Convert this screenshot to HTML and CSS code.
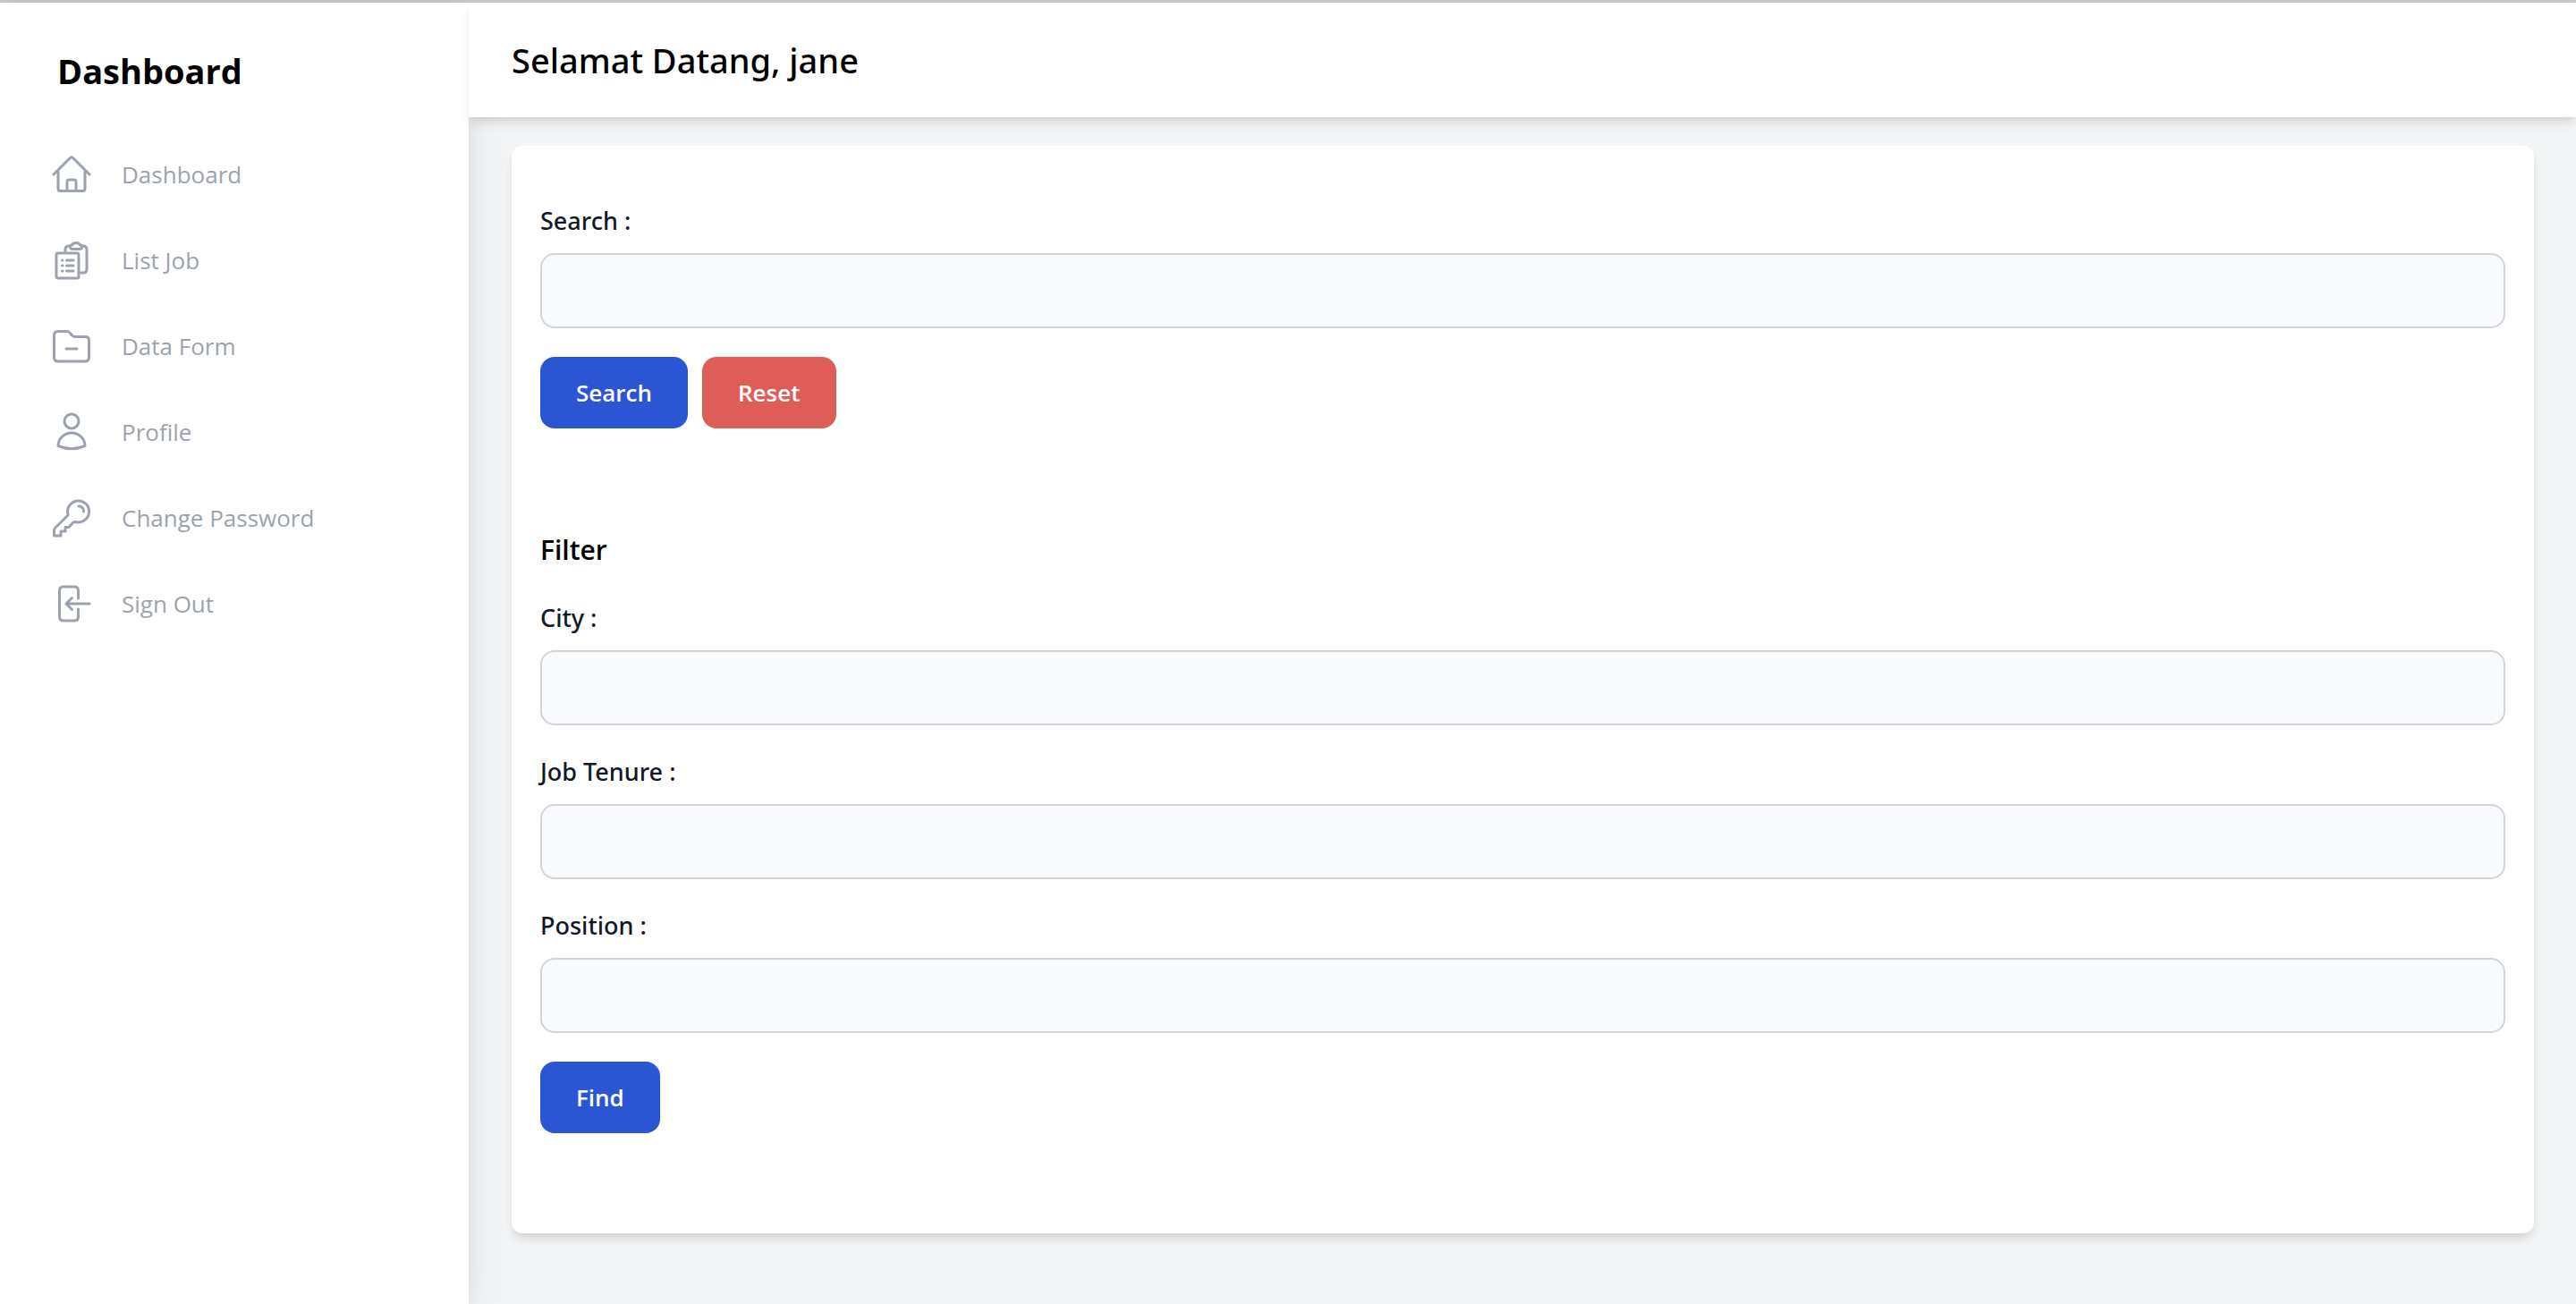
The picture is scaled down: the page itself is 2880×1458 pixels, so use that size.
FILE: index.html
```html
<!DOCTYPE html>
<html lang="id">
<head>
<meta charset="utf-8">
<title>Dashboard</title>
<link rel="stylesheet" href="styles.css">
</head>
<body>
<div class="layout">
  <aside class="sidebar">
    <h1 class="brand">Dashboard</h1>
    <nav class="nav">
      <a class="nav-link" href="#"><svg class="icon" viewBox="0 0 48 48"><path d="M4 24 22.500 5.500Q24 4 25.500 5.500L44 24M9 19V40Q9 42.500 11.500 42.500H36.500Q39 42.500 39 40V19M19 42V32Q19 30 21 30H27Q29 30 29 32V42"/></svg><span>Dashboard</span></a>
      <a class="nav-link" href="#"><svg class="icon" viewBox="0 0 48 48"><rect x="7" y="16" width="25" height="28" rx="2"/><path d="M17 15V12Q17 8 21 8H22M36 8H37Q41 8 41 12V34Q41 38 37 38H33M22.500 9Q22.500 7 25 6.500Q26 4.500 29 4.500T33 6.500Q35.500 7 35.500 9Q35.500 11.500 33 11.500H25Q22.500 11.500 22.500 9ZM13.500 24H14M18.500 24H26M13.500 30H14M18.500 30H26M13.500 36H14M18.500 36H26"/></svg><span>List Job</span></a>
      <a class="nav-link" href="#"><svg class="icon" viewBox="0 0 48 48"><path d="M4.500 12Q4.500 7.500 9 7.500H19Q21 7.500 22.500 9.500L24.500 12Q26 13.500 28 13.500H39.500Q43.500 13.500 43.500 17.500V36.500Q43.500 41 39 41H9Q4.500 41 4.500 36.500ZM18 27H30"/></svg><span>Data Form</span></a>
      <a class="nav-link" href="#"><svg class="icon" viewBox="0 0 48 48"><circle cx="24" cy="12" r="8"/><path d="M9 39.500A15 14.500 0 0 1 39 39.500Q24 46 9 39.500Z"/></svg><span>Profile</span></a>
      <a class="nav-link" href="#"><svg class="icon" viewBox="0 0 48 48"><path d="M20 20A12 12 0 1 1 28.500 28.500L26 29 21 34.500H17V39H12V44H4.500V38Q4.500 36.500 5.500 35.500L20 21ZM32 11Q37.500 11 37.500 17"/></svg><span>Change Password</span></a>
      <a class="nav-link" href="#"><svg class="icon" viewBox="0 0 48 48"><path d="M31.500 18V9.500Q31.500 5 27 5H15Q10.500 5 10.500 9.500V38.500Q10.500 43 15 43H27Q31.500 43 31.500 38.500V30M44 24H18M24.500 17.500 18 24 24.500 30.500"/></svg><span>Sign Out</span></a>
    </nav>
  </aside>
  <div class="content">
    <header class="topbar"><h2 class="greeting">Selamat Datang, jane</h2></header>
    <main class="main">
      <div class="card">
        <form class="form">
          <label class="label" for="search">Search :</label>
          <input class="input" id="search" type="text">
          <div class="actions">
            <button class="btn" type="button">Search</button>
            <button class="btn btn-danger" type="button">Reset</button>
          </div>
        </form>
        <form class="form form-filter">
          <h3 class="form-title">Filter</h3>
          <label class="label" for="city">City :</label>
          <input class="input" id="city" type="text">
          <label class="label" for="tenure">Job Tenure :</label>
          <input class="input" id="tenure" type="text">
          <label class="label" for="position">Position :</label>
          <input class="input" id="position" type="text">
          <div class="actions"><button class="btn" type="button">Find</button></div>
        </form>
      </div>
    </main>
  </div>
</div>
</body>
</html>
```
FILE: styles.css
```css
* { box-sizing: border-box; margin: 0; }
body {
  font-family: "Segoe UI", "Open Sans", "Noto Sans", sans-serif;
  font-size: 26px;
  line-height: 40px;
  color: #000;
  background: #f3f4f6;
}
.layout { display: flex; min-height: 100vh; border-top: 3px solid #c4c9c6; }
.sidebar {
  flex: 0 0 524px;
  background: #fff;
  box-shadow: 0 20px 50px -10px rgba(0, 0, 0, .12), 0 8px 20px -6px rgba(0, 0, 0, .1);
}
.brand { padding: 46px 64px 0; font-size: 38px; line-height: 60px; font-weight: 700; }
.nav { display: flex; flex-direction: column; padding: 38px 56px; }
.nav-link { display: flex; align-items: center; gap: 32px; height: 96px; color: #9ca3af; text-decoration: none; }
.icon {
  flex: none; width: 48px; height: 48px; fill: none; stroke: currentColor;
  stroke-width: 3; stroke-linecap: round; stroke-linejoin: round;
}
.content { flex: 1; min-width: 0; }
.topbar {
  padding: 32px 48px; background: #fff;
  box-shadow: 0 8px 12px -2px rgba(0, 0, 0, .1), 0 4px 8px -4px rgba(0, 0, 0, .1);
}
.greeting { font-family: "Segoe UI", "Noto Sans", sans-serif; font-size: 38px; line-height: 64px; font-weight: 500; }
.main { padding: 32px 47px 78px 48px; }
.card {
  padding: 64px 32px 112px; border-radius: 12px; background: #fff;
  box-shadow: 0 8px 12px -2px rgba(0, 0, 0, .1), 0 4px 8px -4px rgba(0, 0, 0, .1);
}
.form { display: flex; flex-direction: column; }
.form-filter { margin-top: 112px; }
.form-title { margin-bottom: 32px; font-size: 30px; line-height: 48px; font-weight: 600; }
.label { margin-bottom: 16px; font-family: "Segoe UI", "Noto Sans", sans-serif; font-size: 27px; font-weight: 500; color: #111827; }
.input {
  width: 100%; height: 84px; margin-bottom: 32px; padding: 0 24px; font: inherit;
  border: 2px solid #d1d5db; border-radius: 16px; background: #f9fafb;
}
.actions { display: flex; gap: 16px; }
.btn {
  height: 80px; padding: 0 40px; border: 0; border-radius: 16px;
  background: #2b55d3; color: #fff; font: inherit; font-weight: 600;
}
.btn-danger { background: #df5d59; }
```
